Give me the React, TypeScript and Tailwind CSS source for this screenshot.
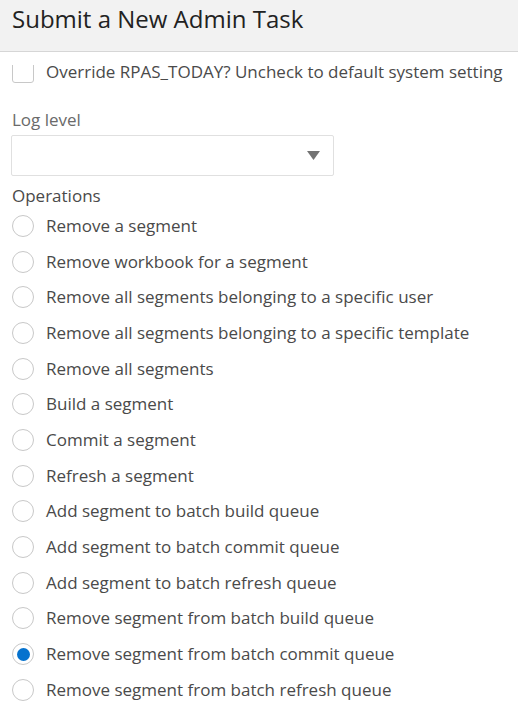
const operations = [
  'Remove a segment',
  'Remove workbook for a segment',
  'Remove all segments belonging to a specific user',
  'Remove all segments belonging to a specific template',
  'Remove all segments',
  'Build a segment',
  'Commit a segment',
  'Refresh a segment',
  'Add segment to batch build queue',
  'Add segment to batch commit queue',
  'Add segment to batch refresh queue',
  'Remove segment from batch build queue',
  'Remove segment from batch commit queue',
  'Remove segment from batch refresh queue',
];

const selected = 'Remove segment from batch commit queue';

const Radio = ({ checked }: { checked: boolean }) => (
  <span className="flex h-[22px] w-[22px] shrink-0 items-center justify-center rounded-full border-[1.5px] border-[#c8c8c8] bg-white">
    {checked && <span className="h-[13px] w-[13px] rounded-full bg-[#0572ce]" />}
  </span>
);

export default function App() {
  return (
    <div className="h-[715px] w-[518px] overflow-hidden bg-white text-[17px] text-[#333] [font-family:'Open_Sans',sans-serif]">
      <div className="h-[52px] border-b border-[#d6d6d6] bg-[#f2f2f2] px-[12px] pt-[3px]">
        <h1 className="text-[24px] leading-[32px] text-[#222]">Submit a New Admin Task</h1>
      </div>
      <div className="pt-[13px]">
        <div className="h-[650px] overflow-hidden px-[12px]">
          <div className="-mt-[4px] flex h-[22px] items-center gap-[12px]">
            <span className="h-[22px] w-[22px] shrink-0 rounded-[3px] border-[1.5px] border-[#c8c8c8] bg-white" />
            <span className="whitespace-nowrap leading-[22px] text-[#4a4a4a]">Override RPAS_TODAY? Uncheck to default system setting</span>
          </div>
          <div className="mt-[25px] leading-[24px] text-[#6a6a6a]">Log level</div>
          <div className="-ml-[1px] mt-[3px] flex h-[41px] w-[323px] items-center justify-end rounded-[2px] border border-[#e0e0e0] bg-white pr-[13px]">
            <svg width="13" height="9" viewBox="0 0 13 9">
              <path d="M0 0 H13 L6.5 9 Z" fill="#737373" />
            </svg>
          </div>
          <div className="mt-[8px] leading-[24px] text-[#4a4a4a]">Operations</div>
          <div className="flex flex-col">
            {operations.map((op) => (
              <label key={op} className="flex h-[35.7px] items-center gap-[12px]">
                <Radio checked={op === selected} />
                <span className="whitespace-nowrap leading-[22px] text-[#4a4a4a]">{op}</span>
              </label>
            ))}
          </div>
        </div>
      </div>
    </div>
  );
}
